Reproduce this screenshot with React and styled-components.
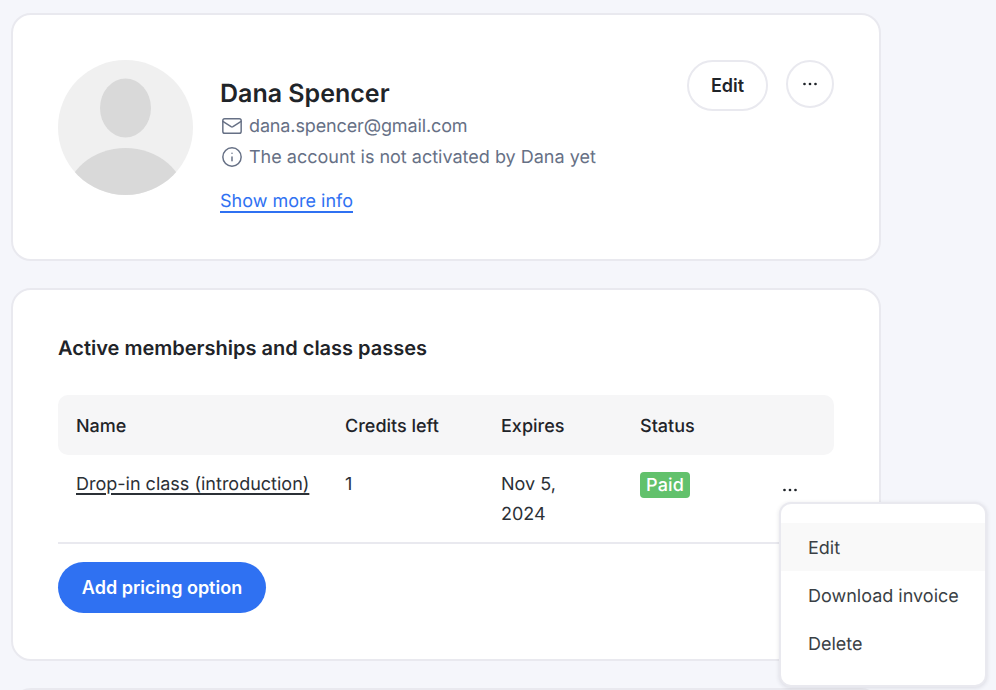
import styled, { createGlobalStyle } from 'styled-components';
import { Mail, Info } from 'lucide-react';

const GlobalStyle = createGlobalStyle`
  html, body {
    margin: 0;
    height: 690px;
    overflow: hidden;
    background: #f5f6fb;
    font-family: Inter, 'Liberation Sans', sans-serif;
    color: #1f2429;
    text-rendering: geometricPrecision;
  }
  * { box-sizing: border-box; }
`;

function Dots({ size = 16 }) {
  return (
    <svg width={size} height={size} viewBox="0 0 16 16" fill="#1f2429">
      <circle cx="2.5" cy="8" r="1.35" />
      <circle cx="8" cy="8" r="1.35" />
      <circle cx="13.5" cy="8" r="1.35" />
    </svg>
  );
}

function AvatarImage() {
  return (
    <svg width="135" height="135" viewBox="0 0 135 135">
      <clipPath id="avatar-clip">
        <circle cx="67.5" cy="67.5" r="67.5" />
      </clipPath>
      <circle cx="67.5" cy="67.5" r="67.5" fill="#f0f0f0" />
      <ellipse cx="67.5" cy="48" rx="25.5" ry="29.5" fill="#d9d9d9" />
      <ellipse cx="67.5" cy="140" rx="60" ry="52" fill="#d9d9d9" clipPath="url(#avatar-clip)" />
    </svg>
  );
}

export default function App() {
  return (
    <Page>
      <GlobalStyle />
      <ProfileCard>
        <Avatar>
          <AvatarImage />
        </Avatar>
        <ProfileInfo>
          <Name>Dana Spencer</Name>
          <MetaRow $spacing="-0.13px">
            <Mail size={22} strokeWidth={1.6} />
            dana.spencer@gmail.com
          </MetaRow>
          <MetaRow>
            <Info size={22} strokeWidth={1.6} />
            The account is not activated by Dana yet
          </MetaRow>
          <MoreLink>Show more info</MoreLink>
        </ProfileInfo>
        <ProfileActions>
          <EditButton>Edit</EditButton>
          <RoundButton>
            <Dots />
          </RoundButton>
        </ProfileActions>
      </ProfileCard>

      <MembershipCard>
        <SectionTitle>Active memberships and class passes</SectionTitle>
        <TableHead>
          <span>Name</span>
          <span>Credits left</span>
          <span>Expires</span>
          <span>Status</span>
        </TableHead>
        <TableRow>
          <PassName>Drop-in class (introduction)</PassName>
          <span>1</span>
          <Expires>Nov 5, 2024</Expires>
          <BadgeCell>
            <Badge>Paid</Badge>
          </BadgeCell>
          <RowAction>
            <Dots />
          </RowAction>
        </TableRow>
        <AddButton>Add pricing option</AddButton>
        <Menu>
          <MenuItem $active>Edit</MenuItem>
          <MenuItem>Download invoice</MenuItem>
          <MenuItem>Delete</MenuItem>
        </Menu>
      </MembershipCard>

      <NextCard />
    </Page>
  );
}

const Page = styled.div`
  display: flex;
  flex-direction: column;
  gap: 27px;
  width: 881px;
  padding: 13px 0 0 11px;
`;

const Card = styled.section`
  width: 870px;
  background: #fff;
  border: 2px solid #e9e9ef;
  border-radius: 20px;
`;

const ProfileCard = styled(Card)`
  height: 248px;
  padding: 45px;
  display: flex;
  gap: 27px;
`;

const Avatar = styled.div`
  width: 135px;
  height: 135px;
  flex: none;

  svg {
    display: block;
  }
`;

const ProfileInfo = styled.div`
  flex: 1;
  display: flex;
  flex-direction: column;
  padding-top: 18px;
`;

const Name = styled.h1`
  flex: none;
  margin: 0 0 1px;
  font-size: 25px;
  line-height: 32px;
  font-weight: 600;
`;

const MetaRow = styled.div`
  flex: none;
  display: flex;
  align-items: center;
  gap: 6px;
  height: 30px;
  font-size: 18px;
  letter-spacing: ${(props) => props.$spacing || 'normal'};
  color: #667085;

  & + & {
    margin-top: 1px;
  }

  svg {
    flex: none;
    margin-left: 1px;
    color: #667085;
  }
`;

const MoreLink = styled.a`
  flex: none;
  align-self: flex-start;
  margin-top: 17px;
  font-size: 18px;
  line-height: 26px;
  color: #2f71f2;
  text-decoration: underline;
  text-decoration-thickness: 2px;
  text-underline-offset: 4px;
`;

const ProfileActions = styled.div`
  display: flex;
  align-items: flex-start;
  gap: 18px;
  height: 51px;
`;

const EditButton = styled.button`
  width: 81px;
  height: 51px;
  background: #fff;
  border: 2px solid #e9e9ef;
  border-radius: 26px;
  font: 600 18px Inter, sans-serif;
  color: #1f2429;
`;

const RoundButton = styled.button`
  width: 48px;
  height: 48px;
  display: flex;
  align-items: center;
  justify-content: center;
  padding: 0;
  background: #fff;
  border: 2px solid #e9e9ef;
  border-radius: 50%;
`;

const MembershipCard = styled(Card)`
  position: relative;
  height: 373px;
  padding: 44px 45px 45px;
`;

const SectionTitle = styled.h2`
  margin: 0 0 33px;
  font-size: 20px;
  line-height: 28px;
  font-weight: 600;
`;

const columns = `269px 156px 139px 1fr 52px`;

const TableHead = styled.div`
  display: grid;
  grid-template-columns: ${columns};
  align-items: center;
  height: 60px;
  padding: 2px 0 0 18px;
  background: #f6f6f7;
  border-radius: 10px;
  font-size: 18px;
  font-weight: 450;
`;

const TableRow = styled.div`
  display: grid;
  grid-template-columns: ${columns};
  align-items: start;
  height: 89px;
  padding: 15px 0 0 18px;
  border-bottom: 2px solid #e9e9ef;
  font-size: 18px;
  line-height: 30px;
  color: #2b3036;
`;

const PassName = styled.a`
  color: #2b3036;
  text-decoration: underline;
  text-decoration-thickness: 2px;
  text-underline-offset: 3px;
`;

const Expires = styled.span`
  max-width: 80px;
`;

const BadgeCell = styled.span`
  display: flex;
  padding-top: 2px;
`;

const Badge = styled.span`
  display: inline-flex;
  align-items: center;
  height: 26px;
  padding: 2px 6px 0;
  background: #62c16c;
  border-radius: 4px;
  color: #fff;
  font-size: 18px;
  font-weight: 500;
  letter-spacing: 0.2px;
`;

const RowAction = styled.span`
  display: flex;
  padding-top: 12px;
`;

const AddButton = styled.button`
  display: block;
  width: 208px;
  height: 51px;
  margin-top: 18px;
  background: #2f71f2;
  border: 0;
  border-radius: 26px;
  color: #fff;
  font: 600 18px Inter, sans-serif;
`;

const Menu = styled.div`
  position: absolute;
  top: 212px;
  left: 766px;
  width: 208px;
  height: 185px;
  padding: 19px 0;
  background: #fff;
  border: 2px solid #e9e9ef;
  border-radius: 12px;
  box-shadow: 0 1px 4px rgba(30, 35, 60, 0.12);
`;

const MenuItem = styled.div`
  display: flex;
  align-items: center;
  height: 48px;
  padding: 2px 0 0 27px;
  background: ${(props) => (props.$active ? '#f9f9f9' : 'transparent')};
  font-size: 18px;
  color: #3a3f45;
`;

const NextCard = styled(Card)`
  height: 200px;
  flex: none;
`;
